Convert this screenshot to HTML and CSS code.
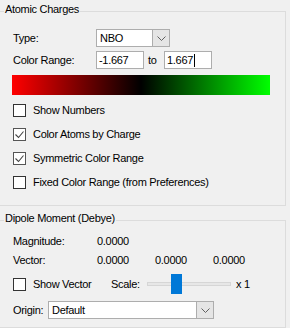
FILE: index.html
```html
<!DOCTYPE html>
<html>
<head>
    <title>Charges</title>
    <link rel="stylesheet" href="styles.css">
</head>
<body>
    <div class="group charges">
        <div class="legend">Atomic Charges</div>
        <div class="row type-row">
            <span class="label">Type:</span>
            <div class="combo type-combo">
                <span class="combo-text">NBO</span>
                <span class="combo-btn"><svg width="9" height="5" viewBox="0 0 9 5"><path d="M0.5 0.5 L4.5 4.5 L8.5 0.5" fill="none" stroke="#606060" stroke-width="1"/></svg></span>
            </div>
        </div>
        <div class="row range-row">
            <span class="label">Color Range:</span>
            <div class="field">-1.667</div>
            <span class="to">to</span>
            <div class="field">1.667<span class="caret"></span></div>
        </div>
        <div class="gradient"></div>
        <div class="checks">
            <div class="check"><span class="box"></span>Show Numbers</div>
            <div class="check"><span class="box checked"><svg width="11" height="11" viewBox="0 0 11 11"><path d="M1.5 5.5 L4.5 8.5 L9.5 2.5" fill="none" stroke="#444" stroke-width="1.1"/></svg></span>Color Atoms by Charge</div>
            <div class="check"><span class="box checked"><svg width="11" height="11" viewBox="0 0 11 11"><path d="M1.5 5.5 L4.5 8.5 L9.5 2.5" fill="none" stroke="#444" stroke-width="1.1"/></svg></span>Symmetric Color Range</div>
            <div class="check"><span class="box"></span>Fixed Color Range (from Preferences)</div>
        </div>
    </div>

    <div class="group dipole">
        <div class="legend">Dipole Moment (Debye)</div>
        <div class="row magnitude-row">
            <span class="label wide">Magnitude:</span>
            <span class="val">0.0000</span>
        </div>
        <div class="row vector-values">
            <span class="label wide">Vector:</span>
            <span class="val">0.0000</span>
            <span class="val">0.0000</span>
            <span class="val">0.0000</span>
        </div>
        <div class="row vector-row">
            <span class="box"></span>
            <span class="show-vector">Show Vector</span>
            <span class="scale">Scale:</span>
            <div class="slider">
                <div class="track"></div>
                <div class="thumb"></div>
            </div>
            <span class="times">x 1</span>
        </div>
        <div class="row origin-row">
            <span class="origin-label">Origin:</span>
            <div class="combo origin-combo">
                <span class="combo-text">Default</span>
                <span class="combo-btn"><svg width="9" height="5" viewBox="0 0 9 5"><path d="M0.5 0.5 L4.5 4.5 L8.5 0.5" fill="none" stroke="#606060" stroke-width="1"/></svg></span>
            </div>
        </div>
    </div>
</body>
</html>
```

FILE: styles.css
```css
body {
    margin: 0;
    width: 290px;
    height: 328px;
    overflow: hidden;
    background-color: #f0f0f0;
    font-family: "Liberation Sans", Arial, sans-serif;
    font-size: 11px;
    line-height: 13px;
    letter-spacing: -0.3px;
    color: #000;
}

.group {
    border: 1px solid #dcdcdc;
    margin: 0 4px 0 -2px;
    padding: 0 0 0 14px;
}

.charges {
    margin-top: 11px;
    padding-bottom: 16px;
}

.dipole {
    margin-top: 14px;
    padding-bottom: 8px;
}

.legend {
    width: fit-content;
    margin: -9px 0 0 -9px;
    padding: 0 1px;
    background-color: #f0f0f0;
}

.row {
    display: flex;
    align-items: center;
}

.label {
    width: 83px;
}

.label.wide {
    width: 84px;
}

.type-row {
    margin-top: 13px;
}

.combo {
    display: flex;
    height: 18px;
    box-sizing: border-box;
    border: 1px solid #adadad;
    background-color: #fff;
}

.type-combo {
    width: 74px;
}

.combo-text {
    flex: 1;
    padding-left: 3px;
    line-height: 16px;
}

.combo-btn {
    width: 16px;
    display: flex;
    align-items: center;
    justify-content: center;
    background-color: #e5e5e5;
    border-left: 1px solid #adadad;
}

.range-row {
    margin-top: 4px;
}

.field {
    width: 48px;
    height: 18px;
    box-sizing: border-box;
    border: 1px solid #adadad;
    background-color: #fff;
    padding-left: 2px;
    line-height: 16px;
}

.caret {
    display: inline-block;
    width: 1px;
    height: 13px;
    margin-left: 1px;
    background-color: #000;
    vertical-align: -3px;
}

.to {
    width: 20px;
    padding-left: 4px;
    box-sizing: border-box;
}

.gradient {
    margin: 6px 0 0 -1px;
    width: 258px;
    height: 20px;
    background: linear-gradient(to right, #ff0000, #000000 50%, #00ff00);
}

.checks {
    margin-top: 9px;
}

.check {
    display: flex;
    align-items: center;
    height: 13px;
    margin-top: 11px;
}

.check:first-child {
    margin-top: 0;
}

.box {
    width: 13px;
    height: 13px;
    box-sizing: border-box;
    border: 1px solid #333;
    background-color: #fff;
    margin-right: 7px;
    display: flex;
    align-items: center;
    justify-content: center;
    flex-shrink: 0;
}

.box.checked {
    border-color: #555;
}

.magnitude-row {
    margin-top: 10px;
}

.vector-values {
    margin-top: 6px;
}

.val {
    width: 58px;
}

.vector-row {
    margin-top: 7px;
    height: 20px;
}

.show-vector {
    width: 78px;
}

.scale {
    width: 36px;
}

.slider {
    display: grid;
    width: 84px;
    height: 20px;
    align-items: center;
}

.track,
.thumb {
    grid-area: 1 / 1;
}

.track {
    height: 4px;
    box-sizing: border-box;
    border: 1px solid #d6d6d6;
    background-color: #e7e7e7;
}

.thumb {
    width: 11px;
    height: 20px;
    margin-left: 24px;
    background-color: #0078d7;
}

.times {
    margin-left: 5px;
}

.origin-row {
    margin-top: 7px;
}

.origin-label {
    width: 35px;
}

.origin-combo {
    width: 166px;
}
```
